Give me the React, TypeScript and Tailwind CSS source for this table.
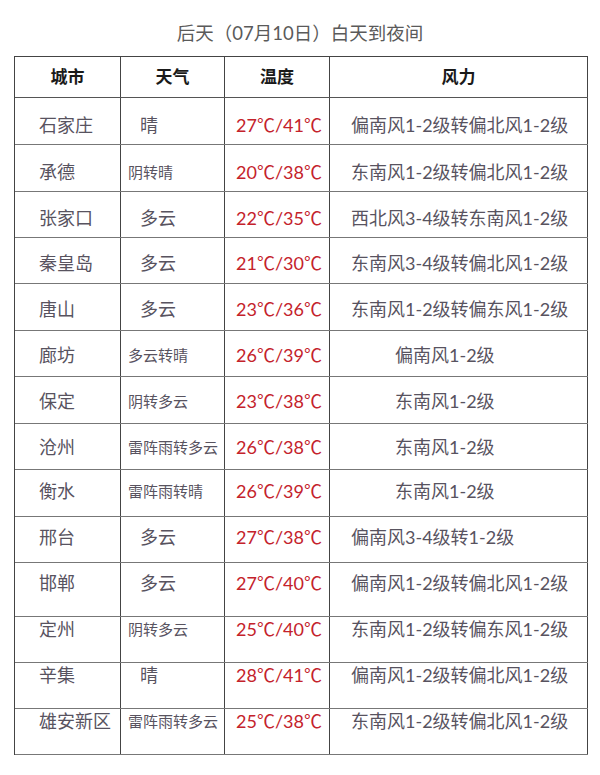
const font = { fontFamily: 'Lato, "Noto Sans CJK SC", sans-serif' };

type Row = {
  city: string;
  weather: string;
  small?: boolean;
  temp: string;
  wind: string;
  short?: boolean;
  h: string;
  pt: string;
};

const rows: Row[] = [
  { city: '石家庄', weather: '晴', temp: '27℃/41℃', wind: '偏南风1-2级转偏北风1-2级', h: 'h-[47px]', pt: 'pt-[15px]' },
  { city: '承德', weather: '阴转晴', small: true, temp: '20℃/38℃', wind: '东南风1-2级转偏北风1-2级', h: 'h-[47px]', pt: 'pt-[15px]' },
  { city: '张家口', weather: '多云', temp: '22℃/35℃', wind: '西北风3-4级转东南风1-2级', h: 'h-[46px]', pt: 'pt-[14px]' },
  { city: '秦皇岛', weather: '多云', temp: '21℃/30℃', wind: '东南风3-4级转偏北风1-2级', h: 'h-[46px]', pt: 'pt-[13px]' },
  { city: '唐山', weather: '多云', temp: '23℃/36℃', wind: '东南风1-2级转偏东风1-2级', h: 'h-[47px]', pt: 'pt-[13px]' },
  { city: '廊坊', weather: '多云转晴', small: true, temp: '26℃/39℃', wind: '偏南风1-2级', short: true, h: 'h-[46px]', pt: 'pt-[12px]' },
  { city: '保定', weather: '阴转多云', small: true, temp: '23℃/38℃', wind: '东南风1-2级', short: true, h: 'h-[47px]', pt: 'pt-[12px]' },
  { city: '沧州', weather: '雷阵雨转多云', small: true, temp: '26℃/38℃', wind: '东南风1-2级', short: true, h: 'h-[46px]', pt: 'pt-[11px]' },
  { city: '衡水', weather: '雷阵雨转晴', small: true, temp: '26℃/39℃', wind: '东南风1-2级', short: true, h: 'h-[47px]', pt: 'pt-[9px]' },
  { city: '邢台', weather: '多云', temp: '27℃/38℃', wind: '偏南风3-4级转1-2级', h: 'h-[46px]', pt: 'pt-[8px]' },
  { city: '邯郸', weather: '多云', temp: '27℃/40℃', wind: '偏南风1-2级转偏北风1-2级', h: 'h-[54px]', pt: 'pt-[8px]' },
  { city: '定州', weather: '阴转多云', small: true, temp: '25℃/40℃', wind: '东南风1-2级转偏东风1-2级', h: 'h-[46px]', pt: 'pt-0' },
  { city: '辛集', weather: '晴', temp: '28℃/41℃', wind: '偏南风1-2级转偏北风1-2级', h: 'h-[46px]', pt: 'pt-0' },
  { city: '雄安新区', weather: '雷阵雨转多云', small: true, temp: '25℃/38℃', wind: '东南风1-2级转偏北风1-2级', h: 'h-[46px]', pt: 'pt-0' },
];

export default function App() {
  return (
    <div className="w-[600px] h-[775px] bg-white" style={font}>
      <div className="pt-[21px] h-[56px] text-center text-[18.5px] leading-6 text-[#5a5a5a]">
        后天（07月10日）白天到夜间
      </div>
      <div className="ml-[14px] w-[574px] border-l border-t border-[#444]">
        {/* header */}
        <div className="flex h-[41px] border-b border-[#555] text-[17px] font-bold text-[#1a1a1a]">
          <div className="w-[106px] border-r border-[#444] flex items-center justify-center">城市</div>
          <div className="w-[104px] border-r border-[#444] flex items-center justify-center">天气</div>
          <div className="w-[105px] border-r border-[#444] flex items-center justify-center">温度</div>
          <div className="w-[258px] border-r border-[#444] flex items-center justify-center">风力</div>
        </div>
        {rows.map((r) => (
          <div key={r.city} className={`flex border-b border-[#777] text-[#58535f] leading-6 ${r.h}`}>
            <div className={`w-[106px] border-r border-[#444] pl-[24px] text-[18px] ${r.pt}`}>{r.city}</div>
            <div className={`w-[104px] border-r border-[#444] ${r.pt}`}>
              {r.small ? (
                <span className="pl-[7px] text-[15px]">{r.weather}</span>
              ) : (
                <span className="pl-[19px] text-[18px]">{r.weather}</span>
              )}
            </div>
            <div className={`w-[105px] border-r border-[#444] pl-[11px] text-[18px] text-[#c4222b] ${r.pt}`}>{r.temp}</div>
            <div className={`w-[258px] border-r border-[#444] text-[18px] whitespace-nowrap ${r.short ? 'pl-[65px]' : 'pl-[21px]'} ${r.pt}`}>
              {r.wind}
            </div>
          </div>
        ))}
      </div>
    </div>
  );
}
